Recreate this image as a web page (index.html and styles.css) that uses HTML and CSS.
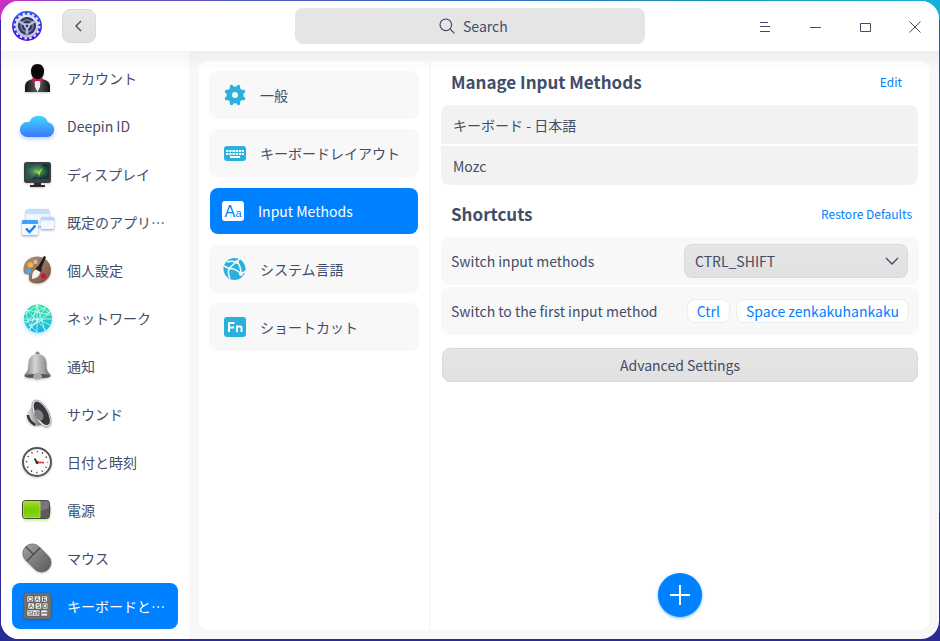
FILE: index.html
```html
<!DOCTYPE html>
<html lang="ja">
<head>
<meta charset="utf-8">
<meta name="viewport" content="width=device-width, initial-scale=1">
<title>Control Center</title>
<link rel="stylesheet" href="styles.css">
</head>
<body>
<div class="window">
  <header class="titlebar">
    <div class="titlebar-left">
      <svg class="logo" viewBox="0 0 32 32" aria-hidden="true">
        <defs>
          <linearGradient id="logoRing" x1="0" y1="0" x2="0" y2="1"><stop offset="0" stop-color="#2b55f5"/><stop offset="1" stop-color="#4a10dc"/></linearGradient>
          <linearGradient id="logoGear" x1="0" y1="0" x2="0" y2="1"><stop offset="0" stop-color="#e4e6f4"/><stop offset="1" stop-color="#b9bddb"/></linearGradient>
        </defs>
        <circle cx="16" cy="16" r="15" fill="url(#logoRing)"/>
        <circle cx="16" cy="16" r="12.2" fill="none" stroke="#dfe2f4" stroke-width="2.4" stroke-dasharray="2.4 2.39"/>
        <circle cx="16" cy="16" r="10" fill="none" stroke="url(#logoGear)" stroke-width="3"/>
        <circle cx="16" cy="16" r="9" fill="#2b3068"/>
        <circle cx="16" cy="16" r="6" fill="none" stroke="#6d7385" stroke-width="2"/>
        <path d="M16 16v8.500M16 16l-7.400-4.300M16 16l7.400-4.300" stroke="#b4b9d2" stroke-width="2.600"/>
        <circle cx="16" cy="16" r="2.800" fill="#d0d4e6"/>
        <circle cx="16" cy="16" r="1.400" fill="#30356e"/>
      </svg>
      <button class="back" type="button" aria-label="Back"><svg viewBox="0 0 12 12"><path d="M8 1L3 6l5 5"/></svg></button>
    </div>
    <label class="search">
      <svg viewBox="0 0 16 16" aria-hidden="true"><circle cx="6.800" cy="6.800" r="5.800"/><path d="M11 11l4.400 4.400"/></svg>
      <input type="text" placeholder="Search" aria-label="Search">
    </label>
    <div class="controls">
      <button type="button" aria-label="Menu"><svg viewBox="0 0 12 12"><path d="M1 1.500h8M1 5.500h10M1 10.500h10"/></svg></button>
      <button type="button" aria-label="Minimize"><svg viewBox="0 0 12 12"><path d="M1 6.500h11"/></svg></button>
      <button type="button" aria-label="Maximize"><svg viewBox="0 0 12 12"><path d="M1.500 2.500h10v8h-10z"/></svg></button>
      <button type="button" aria-label="Close"><svg viewBox="0 0 12 12"><path d="M.5.5l11 11M11.500.5l-11 11"/></svg></button>
    </div>
  </header>
  <main class="body">
    <nav class="sidebar" aria-label="Modules">
      <a class="module" href="#"><svg viewBox="0 0 36 36" aria-hidden="true">
        <defs><linearGradient id="suit" x1="0" y1="0" x2="1" y2="0"><stop offset="0" stop-color="#111"/><stop offset=".35" stop-color="#4a4a4a"/><stop offset=".65" stop-color="#4a4a4a"/><stop offset="1" stop-color="#111"/></linearGradient></defs>
        <path d="M6 32v-5c0-5 3-7 8-8h9c5 1 8 3 8 8v5z" fill="url(#suit)"/>
        <path d="M15.500 21h6l-.5 6-2.500 5-2.500-5z" fill="#eee"/>
        <path d="M18.500 4c4 0 6.500 2.800 6.500 7 0 4.500-2.400 8.500-6.500 8.500S12 15.500 12 11c0-4.200 2.500-7 6.500-7z" fill="#080808"/>
        <path d="M13.500 17.500l5 2 5-2v5l-5-2-5 2z" fill="#d80a62"/>
      </svg><span>アカウント</span></a>
      <a class="module" href="#"><svg class="cloud" viewBox="0 0 36 36" aria-hidden="true">
        <defs><linearGradient id="cloud" x1="0" y1="0" x2="0" y2="1"><stop offset="0" stop-color="#3fd6fb"/><stop offset="1" stop-color="#3b78fb"/></linearGradient></defs>
        <path d="M9.500 29a7.500 7.500 0 1 1 .8-14.700A10 10 0 0 1 29 14.300 7.400 7.400 0 0 1 28 29z" fill="url(#cloud)"/>
      </svg><span>Deepin ID</span></a>
      <a class="module" href="#"><svg viewBox="0 0 36 36" aria-hidden="true">
        <defs><radialGradient id="screen"><stop offset="0" stop-color="#7bbf32"/><stop offset=".5" stop-color="#2f743f"/><stop offset="1" stop-color="#12343a"/></radialGradient></defs>
        <rect x="5" y="6" width="27" height="21" rx="2.500" fill="#3d3f40"/>
        <rect x="7" y="8" width="23" height="15" fill="url(#screen)"/>
        <path d="M7 8h17L13 23H7z" fill="#7fb0a0" opacity=".25"/>
        <path d="M15 14l4 2 5-5-3 6-1 4-1-3z" fill="#a5d763"/><path d="M18 17l2 3-1 1z" fill="#61208c"/>
        <path d="M15 27h7v2h4v2H11v-2h4z" fill="#2b2c2d"/>
      </svg><span>ディスプレイ</span></a>
      <a class="module" href="#"><svg viewBox="0 0 36 36" aria-hidden="true">
        <g class="lift"><rect x="7" y="5" width="23" height="17" rx="2" fill="#eef6ff"/><path d="M7 10V7a2 2 0 0 1 2-2h19a2 2 0 0 1 2 2v3z" fill="#c3dffd"/></g>
        <g class="lift"><rect x="22" y="13" width="13" height="12" rx="1.500" fill="#f3f9ff"/><path d="M22 16.500V14a1 1 0 0 1 1-1h11a1 1 0 0 1 1 1v2.500z" fill="#b5d8fd"/></g>
        <g class="lift"><rect x="3" y="16" width="16" height="15" rx="1.500" fill="#f5faff"/><path d="M3 20v-3a1 1 0 0 1 1-1h14a1 1 0 0 1 1 1v3z" fill="#3ea4fb"/></g>
        <path d="M7 24.500l3.500 3.500 6-6.500" fill="none" stroke="#0884ff" stroke-width="2.400"/>
      </svg><span>既定のアプリ…</span></a>
      <a class="module" href="#"><svg viewBox="0 0 36 36" aria-hidden="true">
        <defs><linearGradient id="palette" x1="0" y1="0" x2="1" y2="1"><stop offset="0" stop-color="#b79578"/><stop offset="1" stop-color="#74513f"/></linearGradient></defs>
        <path d="M18 4.500c8 0 14 6 14 13.500s-6 13.500-14 13.500c-6 0-9-3-8-6.500.7-2.500-1-3-3-3-2 0-2.500-2.500-2.500-4.500C4.500 10 10 4.500 18 4.500z" fill="url(#palette)"/>
        <circle cx="16.500" cy="10" r="2.200" fill="#d9b8a6"/><circle cx="11.500" cy="13" r="2.700" fill="#f6b73c"/><circle cx="9.500" cy="19" r="2.700" fill="#5aa5ea"/><circle cx="24.500" cy="24" r="2.700" fill="#dc0b42"/>
        <path d="M19 15l6-11 2 1-5 12z" fill="#1e1b1b"/><path d="M16 17l3-3 4 3-1 3z" fill="#25262a"/><path d="M13 27c0-3 0-8 4-9.500l4 2.500c0 4-3 6-8 7z" fill="#f5f2ef"/>
      </svg><span>個人設定</span></a>
      <a class="module" href="#"><svg class="globe" viewBox="0 0 36 36" aria-hidden="true">
        <defs><linearGradient id="globe" x1="0" y1="0" x2="0" y2="1"><stop offset="0" stop-color="#35e3a0"/><stop offset="1" stop-color="#18b4ec"/></linearGradient></defs>
        <circle cx="19" cy="18.500" r="14" fill="url(#globe)"/>
        <g fill="none" stroke="#e8fff8" stroke-width=".7"><path d="M5 19h28M18 5l-7 25M18 5l8 26M18 5v27M8 10l24 5M8 10l19 20M31 11L10 29M6 14l12-9 13 8M5 22l14-3 12 6M11 29l8-10 7-11M9 26c10-2 18-8 22-14M8 10c-1 8 1 15 10 22M7 24c6-9 12-14 20-17"/></g>
      </svg><span>ネットワーク</span></a>
      <a class="module" href="#"><svg viewBox="0 0 36 36" aria-hidden="true">
        <defs><linearGradient id="bell" x1="0" y1="0" x2="1" y2="0"><stop offset="0" stop-color="#777"/><stop offset=".4" stop-color="#d5d5d5"/><stop offset="1" stop-color="#747474"/></linearGradient></defs>
        <circle cx="18.500" cy="5.500" r="2" fill="#888"/>
        <path d="M18.500 6c6 0 9 4.500 9 9.500 0 6 1 8.500 4 11v2c-4 3-22 3-26 0v-2c3-2.500 4-5 4-11 0-5 3-9.500 9-9.500z" fill="url(#bell)"/>
        <ellipse cx="18.500" cy="28" rx="12.500" ry="2.200" fill="#555"/><ellipse cx="18.500" cy="28.500" rx="4.500" ry="3" fill="#aaa"/>
      </svg><span>通知</span></a>
      <a class="module" href="#"><svg viewBox="0 0 36 36" aria-hidden="true">
        <defs><linearGradient id="horn" x1="0" y1="0" x2="1" y2="0"><stop offset="0" stop-color="#eee"/><stop offset="1" stop-color="#666"/></linearGradient></defs>
        <path d="M7 19l7-10 9 20-7 1c-5-1-9-6-9-11z" fill="url(#horn)"/><path d="M9 19c0 5 4 8 7 10" fill="none" stroke="#333" stroke-width="2.500"/>
        <ellipse cx="22.500" cy="17.500" rx="7.200" ry="15" transform="rotate(-29 22.500 17.500)" fill="#e8e8e8" stroke="#888" stroke-width=".6"/>
        <ellipse cx="22.800" cy="17.300" rx="5.700" ry="13.200" transform="rotate(-29 22.800 17.300)" fill="#38393c"/>
        <ellipse cx="20" cy="19" rx="4" ry="6" transform="rotate(-29 20 19)" fill="#808285"/>
      </svg><span>サウンド</span></a>
      <a class="module" href="#"><svg viewBox="0 0 36 36" aria-hidden="true">
        <circle cx="18" cy="18" r="14" fill="#fcfcfc" stroke="#555" stroke-width="2"/>
        <circle cx="18" cy="18" r="10.500" fill="none" stroke="#222" stroke-width="1.600" stroke-dasharray="1 4.498" stroke-dashoffset=".5"/>
        <path d="M18 18.500l-2.500-4" stroke="#222" stroke-width="1.600"/><path d="M18 18.500h7" stroke="#f04242" stroke-width="1.800"/><circle cx="18" cy="18.500" r="1.500" fill="#333"/>
      </svg><span>日付と時刻</span></a>
      <a class="module" href="#"><svg class="battery" viewBox="0 0 36 36" aria-hidden="true">
        <defs><linearGradient id="charge" x1="0" y1="0" x2="0" y2="1"><stop offset="0" stop-color="#a1dd23"/><stop offset=".5" stop-color="#77c900"/><stop offset="1" stop-color="#88d710"/></linearGradient></defs>
        <rect x="29" y="14" width="3" height="7" rx="1" fill="#b8b8b8"/>
        <rect x="3.500" y="8.500" width="27" height="18" rx="3" fill="#5c5c5e" stroke="#464648"/>
        <path d="M21 9h6c2 0 3 1 3 3v4l-9 3z" fill="#777779"/>
        <path d="M6 9.500h15v16H6a1.500 1.500 0 0 1-1.500-1.500V11A1.500 1.500 0 0 1 6 9.500z" fill="url(#charge)" stroke="#b5ec52" stroke-width=".8"/>
      </svg><span>電源</span></a>
      <a class="module" href="#"><svg viewBox="0 0 36 36" aria-hidden="true">
        <defs><linearGradient id="mouse" x1="0" y1="0" x2="0" y2="1"><stop offset="0" stop-color="#9b9b9b"/><stop offset="1" stop-color="#5f5f5f"/></linearGradient></defs>
        <g transform="rotate(-45 18 18)"><rect x="8.500" y="2" width="19" height="32" rx="9.500" fill="url(#mouse)" stroke="#555" stroke-width=".6"/><path d="M8.500 13h19M18 2v11" stroke="#444" stroke-width="1.200"/></g>
      </svg><span>マウス</span></a>
      <a class="module active" href="#" aria-current="page"><svg viewBox="0 0 36 36" aria-hidden="true">
        <rect x="5" y="5" width="27" height="26" rx="3" fill="#707070" stroke="#5b5f66" stroke-width=".6"/>
        <g fill="#f0f0f0" stroke="#494949" stroke-width=".5"><rect x="8" y="8" width="6.300" height="6" rx="1"/><rect x="15.300" y="8" width="6.300" height="6" rx="1"/><rect x="22.600" y="8" width="5.800" height="6" rx="1"/><rect x="9" y="15" width="6.300" height="6" rx="1"/><rect x="16.300" y="15" width="6.300" height="6" rx="1"/><rect x="23.300" y="15" width="5.500" height="6" rx="1"/><rect x="8" y="22" width="13" height="6" rx="1"/><rect x="22" y="22" width="6.500" height="6" rx="1"/></g>
        <g class="keycaps"><text x="9" y="13">Q</text><text x="16.300" y="13">A</text><text x="23.500" y="13">E</text><text x="10" y="20">A</text><text x="17.500" y="20">S</text><text x="24" y="20">D</text><text x="9" y="27">Shift</text></g>
        <path d="M23 25h5" stroke="#333" stroke-width="1"/>
      </svg><span>キーボードと…</span></a>
    </nav>
    <div class="content">
      <nav class="pages" aria-label="Keyboard and language">
        <a class="page" href="#"><svg viewBox="0 0 24 24" aria-hidden="true"><circle cx="12" cy="12" r="8.500"/><path d="M8.500 3.600l7 16.800M15.500 3.600l-7 16.800M3.600 8.500l16.800 7M3.600 15.500l16.800-7" stroke="#2ab0dd" stroke-width="3.600" stroke-linecap="round"/><circle cx="12" cy="12" r="3" fill="#f8f8f8"/></svg><span>一般</span></a>
        <a class="page" href="#"><svg viewBox="0 0 24 24" aria-hidden="true"><rect x="1" y="5" width="22" height="15" rx="3"/><path d="M3 10h18M3 13h18" stroke="#fff" stroke-width="2" stroke-dasharray="2.400 .8"/><path d="M7 16h10" stroke="#fff" stroke-width="2"/></svg><span>キーボードレイアウト</span></a>
        <a class="page active" href="#" aria-current="page"><svg viewBox="0 0 24 24" aria-hidden="true"><rect x="1" y="2" width="22" height="20" rx="3"/><text class="glyph-big" x="3.500" y="18">A</text><text class="glyph-small" x="14.500" y="18">a</text></svg><span>Input Methods</span></a>
        <a class="page" href="#"><svg viewBox="0 0 24 24" aria-hidden="true"><circle cx="11.500" cy="12" r="11"/><path d="M4 5c3-1 6-1 9 0M13 5L6 11.500 1 9M6 11.500c5 0 9 2 12 5.500M14 5c3 3 4 7 4 12M6 11.500c-1 3-1 6 1 10M14 5l3-4M18 17l5-3" fill="none" stroke="#f8f8f8" stroke-width="1.600"/><circle cx="14" cy="5" r="2" fill="#f8f8f8"/><circle cx="18" cy="17" r="2" fill="#f8f8f8"/></svg><span>システム言語</span></a>
        <a class="page" href="#"><svg viewBox="0 0 24 24" aria-hidden="true"><rect x="1" y="2" width="22" height="20" rx="3"/><path d="M6 17V8h5.500M6 12.500h5M14 17v-6.500M14 11.500h3q1.500 0 1.500 1.500v4" fill="none" stroke="#fff" stroke-width="2"/></svg><span>ショートカット</span></a>
      </nav>
      <section class="panel">
        <div class="heading"><h2>Manage Input Methods</h2><a class="edit" href="#">Edit</a></div>
        <ul class="methods"><li>キーボード - 日本語</li><li>Mozc</li></ul>
        <div class="heading second"><h2>Shortcuts</h2><a href="#">Restore Defaults</a></div>
        <div class="row">
          <label for="switch">Switch input methods</label>
          <div class="select"><select id="switch"><option>CTRL_SHIFT</option></select><svg viewBox="0 0 14 8" aria-hidden="true"><path d="M1 1l6 6 6-6"/></svg></div>
        </div>
        <div class="row">
          <span>Switch to the first input method</span>
          <div class="keys"><kbd>Ctrl</kbd><kbd>Space zenkakuhankaku</kbd></div>
        </div>
        <button class="advanced" type="button">Advanced Settings</button>
        <button class="add" type="button" aria-label="Add input method"><svg viewBox="0 0 20 20"><path d="M10 0v20M0 10h20"/></svg></button>
      </section>
    </div>
  </main>
</div>
</body>
</html>
```
FILE: styles.css
```css
* { box-sizing: border-box; }

body {
  margin: 0;
  height: 100vh;
  padding: 1px 1px 2px;
  display: flex;
  background:
    linear-gradient(90deg, #cc2fc4 0, #6a4bc8 10%, #3f5fc0 40%, #1d93c0 75%, #14b0d8) 0 0 / 100% 20px no-repeat,
    linear-gradient(90deg, #34289e 50%, #1d5f88 50%) 0 0 / 100% 80% no-repeat,
    #2c2a94;
  color: #414d68;
  font: 14px/20px "Noto Sans CJK JP", sans-serif;
}

button, input, select, kbd { font: inherit; color: inherit; }
button { padding: 0; border: 0; background: none; }
a { color: inherit; text-decoration: none; }
svg { display: block; flex: none; }

.window {
  flex: 1;
  display: flex;
  flex-direction: column;
  overflow: hidden;
  border-radius: 18px;
  background: #f8f8f8;
}

/* Title bar */
.titlebar {
  display: grid;
  grid-template-columns: 1fr 350px 1fr;
  align-items: center;
  height: 50px;
  flex: none;
  background: #fff;
}
.titlebar-left { display: flex; align-items: center; gap: 19px; padding-left: 10px; }
.logo { width: 32px; height: 32px; }

.back, .search, .select select, .advanced {
  border: 1px solid #d9d9d9;
  border-radius: 8px;
  background: linear-gradient(#e6e6e6, #e1e1e1);
}
.back { width: 34px; height: 34px; display: grid; place-items: center; }
.back svg { width: 12px; height: 12px; }
.back path, .search svg *, .controls path, .select path { fill: none; stroke: #414d68; }
.back path { stroke-width: 1.4; }

.search {
  display: flex;
  align-items: center;
  justify-content: center;
  gap: 8px;
  height: 36px;
  padding-left: 12px;
  border: 0;
  background: #e5e5e5;
}
.search svg { width: 16px; height: 16px; }
.search svg * { stroke-width: 1.2; }
.search input { width: 50px; padding: 0; border: 0; outline: 0; background: none; }
.search input::placeholder { color: #414d68; opacity: 1; }

.controls { display: flex; justify-content: flex-end; }
.controls button { width: 50px; height: 50px; padding: 1px 0 0 1px; display: grid; place-items: center; }
.controls svg { width: 12px; height: 12px; }

/* Body */
.body {
  position: relative;
  flex: 1;
  display: flex;
  min-height: 0;
}
.body::before {
  content: "";
  position: absolute;
  inset: 0 0 auto;
  height: 20px;
  background: linear-gradient(rgba(0, 0, 0, .04), transparent);
  pointer-events: none;
}
.sidebar {
  width: 188px;
  flex: none;
  display: flex;
  flex-direction: column;
  gap: 2px;
  padding: 4px 11px;
  background: #fff;
}
.module {
  display: flex;
  align-items: center;
  gap: 12px;
  height: 46px;
  flex: none;
  padding-left: 7px;
  border-radius: 8px;
  white-space: nowrap;
}
.module svg { width: 36px; height: 36px; filter: drop-shadow(0 1px 1px rgba(0, 0, 0, .2)); }
.module .cloud { filter: drop-shadow(0 2px 2px rgba(59, 120, 251, .35)); }
.module .globe { filter: drop-shadow(0 2px 2px rgba(24, 180, 236, .35)); }
.module .battery { filter: drop-shadow(0 2px 1px rgba(136, 215, 16, .4)); }
.lift { filter: drop-shadow(0 1px 1px rgba(40, 120, 200, .4)); }
.keycaps text { font: 6px "Liberation Sans", sans-serif; fill: #333; }
.active { background-color: #0081ff; color: #fff; }

.content {
  flex: 1;
  display: flex;
  min-width: 0;
  margin: 10px 10px 9px;
  border-radius: 8px;
  background: #fff;
}
.pages {
  width: 232px;
  flex: none;
  display: flex;
  flex-direction: column;
  gap: 10px;
  padding: 10px;
  border-right: 2px solid #f8f8f8;
}
.page {
  display: flex;
  align-items: center;
  gap: 13px;
  height: 48px;
  padding-left: 14px;
  border-radius: 8px;
  background-color: #f8f8f8;
}
.page svg { width: 24px; height: 24px; fill: #2ab0dd; }
.page.active {
  height: 46px;
  margin: 1px;
  padding-left: 11px;
  background-color: #0081ff;
}
.page.active svg { fill: #fff; }
.page text { font-family: "Liberation Sans", sans-serif; fill: #0081ff; }
.glyph-big { font-size: 16px; }
.glyph-small { font-size: 11px; }

/* Input method settings */
.panel {
  flex: 1;
  display: flex;
  flex-direction: column;
  min-width: 0;
  padding: 0 10px;
}
.heading {
  display: flex;
  align-items: center;
  justify-content: space-between;
  height: 44px;
  padding: 0 7px 2px 10px;
}
.heading h2 { margin: 0; font-size: 17px; line-height: 24px; font-weight: 700; }
.heading a { color: #0081ff; font-size: 12px; }
.heading .edit { margin-right: 10px; }
.heading.second { height: 52px; padding-top: 8px; }

.methods {
  display: grid;
  gap: 2px;
  margin: 0 1px 0 0;
  padding: 0;
  list-style: none;
  overflow: hidden;
  border-radius: 8px;
}
.methods li { height: 39px; padding: 10px 12px; background: #f2f2f2; }

.row {
  display: flex;
  align-items: center;
  justify-content: space-between;
  height: 48px;
  margin-bottom: 2px;
  padding: 0 10px;
  border-radius: 8px;
  background: #f8f8f8;
}
.select { position: relative; width: 224px; margin-right: 1px; }
.select select { width: 100%; height: 34px; padding: 0 10px; appearance: none; }
.select svg { position: absolute; right: 9px; top: 13px; width: 14px; height: 8px; pointer-events: none; }
.select path { stroke-width: 1.4; }
.keys { display: flex; gap: 6px; }
kbd {
  height: 24px;
  padding: 1px 9px;
  border: 1px solid #ececec;
  border-radius: 8px;
  background: #fff;
  color: #0081ff;
}
.advanced { height: 34px; flex: none; margin: 11px 1px 0; }
.add {
  width: 44px;
  height: 44px;
  flex: none;
  display: grid;
  place-items: center;
  margin: auto auto 13px;
  border-radius: 50%;
  background: #0081ff;
  box-shadow: 0 1px 3px rgba(0, 129, 255, .6);
}
.add svg { width: 20px; height: 20px; }
.add path { stroke: #fff; stroke-width: 2; }
```
